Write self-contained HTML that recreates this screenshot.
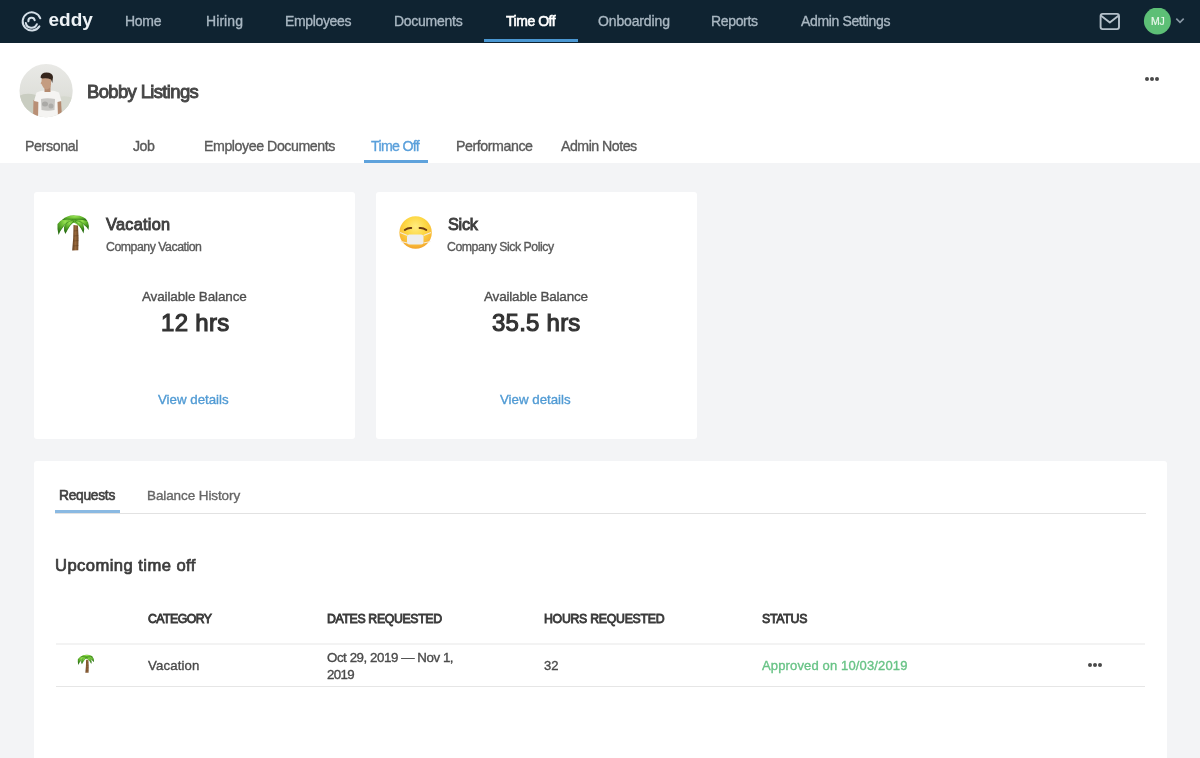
<!DOCTYPE html>
<html><head><meta charset="utf-8">
<style>
html,body{margin:0;padding:0;}
body{width:1200px;height:758px;overflow:hidden;position:relative;background:#f3f4f6;font-family:"Liberation Sans",sans-serif;}
.abs{position:absolute;}
.t{position:absolute;white-space:nowrap;will-change:transform;}
#nav{left:0;top:0;width:1200px;height:42.5px;background:#0f2331;}
#navul{left:483.5px;top:39px;width:94px;height:3px;background:#4a97d2;}
#hdr{left:0;top:42.5px;width:1200px;height:120.3px;background:#ffffff;}
#subul{left:364px;top:160px;width:63.5px;height:3px;background:#5ea2dc;}
.card{background:#fff;border-radius:3px;}
#card1{left:34px;top:192px;width:320.5px;height:246.5px;}
#card2{left:376px;top:192px;width:320.5px;height:246.5px;}
#panel{left:34px;top:461px;width:1132.5px;height:320px;background:#fff;border-radius:3px;}
#tabline{left:55px;top:512.5px;width:1091px;height:1px;background:#e2e2e2;}
#tabul{left:55px;top:510px;width:65px;height:3px;background:#8ab9e2;}
#hline{left:56px;top:642.5px;width:1088.5px;height:2px;background:#f3f3f3;}
#rline{left:56px;top:686px;width:1088.5px;height:1.3px;background:#e6e6e6;}
.dots{position:absolute;height:4px;}
.dots i{position:absolute;top:0;width:4px;height:4px;border-radius:50%;background:#4a4a4a;}
</style></head>
<body>
<div id="nav" class="abs"></div>
<div id="navul" class="abs"></div>
<svg class="abs" style="left:0;top:0;will-change:transform" width="110" height="42" viewBox="0 0 110 42">
 <g fill="none" stroke="#d3dee7" stroke-width="2" stroke-linecap="round">
  <path d="M40.3 18.3 A9.1 9.1 0 1 0 39.4 26.4"/>
  <path d="M25.8 23.0 A5.8 5.8 0 0 0 36.9 24.2"/>
  <path d="M28.4 21.3 A3.2 3.2 0 0 1 34.7 20.2"/>
 </g>
 <text x="48.5" y="25.8" font-family="Liberation Sans" font-weight="700" font-size="19" fill="#edf2f6">eddy</text>
</svg>
<svg class="abs" style="left:1095px;top:8px" width="95" height="30" viewBox="1095 8 95 30">
 <rect x="1100.6" y="13.9" width="18.4" height="15.2" rx="2" fill="none" stroke="#b5c1cb" stroke-width="1.9"/>
 <path d="M1100.8 15.5 L1109.8 22.4 L1118.8 15.5" fill="none" stroke="#b5c1cb" stroke-width="1.9" stroke-linejoin="round"/>
 <circle cx="1157.4" cy="21" r="13.5" fill="#5dbf76"/>
 <path d="M1176.3 18.6 L1180 22.3 L1183.7 18.6" fill="none" stroke="#8a99a6" stroke-width="1.6"/>
</svg>
<div id="hdr" class="abs"></div>
<svg class="abs" style="left:19px;top:64px" width="54" height="54" viewBox="19 64 54 54">
 <defs>
  <clipPath id="avc"><circle cx="46.1" cy="90.7" r="26.6"/></clipPath>
  <linearGradient id="avbg" x1="0" y1="0" x2="0" y2="1">
   <stop offset="0" stop-color="#e9e9e6"/><stop offset="0.5" stop-color="#e0e1dc"/><stop offset="1" stop-color="#d3d6cc"/>
  </linearGradient>
  <filter id="avb" x="-10%" y="-10%" width="120%" height="120%"><feGaussianBlur stdDeviation="0.6"/></filter>
 </defs>
 <g clip-path="url(#avc)">
  <rect x="19" y="64" width="54" height="54" fill="url(#avbg)"/>
  <g filter="url(#avb)">
  <path d="M19 96 Q26 92 36 95 L36 118 L19 118 Z" fill="#c9cdc1"/>
  <path d="M58 97 Q66 95 73 98 L73 118 L58 118 Z" fill="#d5d8ce"/>
  <path d="M33.5 100 L38.5 99 L39 118 L33 118 Z" fill="#b98f74"/>
  <path d="M56.5 99 L61 100 L62 118 L57 118 Z" fill="#b48a70"/>
  <path d="M36.5 92.5 Q41 90.5 44.5 90.5 L50 90.5 Q55 90.5 59 92.5 L61.5 101 L57.5 102 L58 118 L38 118 L38.5 102 L34 101 Z" fill="#f5f4f2"/>
  <path d="M41 99 Q47 97.5 55 99 L54.5 110 Q48 111.5 41.5 110 Z" fill="#a9a7a4" opacity="0.6"/>
  <ellipse cx="45" cy="104" rx="3" ry="2.5" fill="#8e8c89" opacity="0.5"/>
  <ellipse cx="51" cy="106" rx="2.5" ry="2.5" fill="#8e8c89" opacity="0.45"/>
  <path d="M44.5 86 L50.5 86 L50.5 92 L44.5 92 Z" fill="#b48a70"/>
  <path d="M41.8 77 Q42 75 46 75 Q51 75 51.2 79 L51 85 Q50 89 46.5 89.5 Q43.5 89 42.5 86 L41.5 84 L40.6 83.5 L41.5 81.5 Z" fill="#c49c80"/>
  <path d="M40.5 77.5 Q41 72.5 46.5 72.5 Q52.5 72.5 53 77 L52.3 83 L51 79.5 Q47 77.5 42 78.5 Z" fill="#35271f"/>
  </g>
 </g>
</svg>
<div class="dots" style="left:1144.8px;top:76.9px;width:14px"><i style="left:0"></i><i style="left:5px"></i><i style="left:10px"></i></div>
<div id="subul" class="abs"></div>
<div id="card1" class="abs card"></div>
<div id="card2" class="abs card"></div>
<svg width="0" height="0" style="position:absolute"><defs><symbol id="palm" viewBox="52 210 44 44">
 <defs>
  <linearGradient id="trunk" x1="0" y1="0" x2="1" y2="0"><stop offset="0" stop-color="#5e3b1e"/><stop offset="0.5" stop-color="#9a6a3c"/><stop offset="1" stop-color="#6a4524"/></linearGradient>
  <radialGradient id="leaf" cx="0.5" cy="0.25" r="0.7"><stop offset="0" stop-color="#98e452"/><stop offset="0.5" stop-color="#5fb02c"/><stop offset="1" stop-color="#2b7114"/></radialGradient>
 </defs>
 <path d="M73.5 225 L78 225.5 Q79 238 78.3 250.3 L72.2 250.5 Q73.5 238 73.5 225 Z" fill="url(#trunk)"/>
 <path d="M74 231 L78 230.5 M73.8 236 L78.3 235.5 M73.5 241 L78.4 240.5 M73 246 L78.4 245.5" stroke="#5a3a1c" stroke-width="0.7" opacity="0.6"/>
 <g fill="url(#leaf)">
  <path d="M73 217.5 Q62 217 57.5 224 Q57 229 58.5 235 Q61 229 64 226 Q66 222 73 221 Z"/>
  <path d="M73 218 Q66 221 64 227 Q63.5 231 65.5 234 Q67.5 229 70 226 Q72 223 75 222 Z"/>
  <path d="M75 218 Q84 217 88 222 Q89.5 226 88.5 230 Q86 226 83 224 Q79 222 75 222 Z"/>
  <path d="M74 218.5 Q81 220 83.5 225 Q85 229 83.5 233.5 Q81.5 228.5 79 226 Q76 223.5 73 222 Z"/>
  <path d="M62 220 Q68 214.5 76 215.5 Q84 215.5 87.5 221 Q80 219 74 220 Q67 219 62 220 Z"/>
 </g>
 <path d="M73 220 Q65 222 60 231 M74 221 Q69 225 66 232 M75 220 Q82 221 87 227 M75 221 Q80 224 83 231" stroke="#2f7a18" stroke-width="0.8" fill="none" opacity="0.7"/>
</symbol></defs></svg>
<svg class="abs" style="left:52px;top:210px" width="44" height="44"><use href="#palm" width="44" height="44"/></svg>
<svg class="abs" style="left:394px;top:210px" width="44" height="44" viewBox="394 210 44 44">
 <defs>
  <radialGradient id="face" cx="0.5" cy="0.32" r="0.72"><stop offset="0" stop-color="#ffec80"/><stop offset="0.45" stop-color="#fdd743"/><stop offset="0.8" stop-color="#f8b735"/><stop offset="1" stop-color="#ef9c2a"/></radialGradient>
 </defs>
 <circle cx="415.6" cy="232.5" r="16.2" fill="url(#face)"/>
 <path d="M404.8 230 Q408 227.6 411.2 228" fill="none" stroke="#6b3a12" stroke-width="2" stroke-linecap="round"/>
 <path d="M419.6 228 Q423 227.6 426.3 230" fill="none" stroke="#6b3a12" stroke-width="2" stroke-linecap="round"/>
 <path d="M400 232.5 L407.5 235.5 M400.8 241.5 L407.5 243 M431 232.5 L423.5 235.5 M430.4 241.5 L423.5 243" stroke="#f4ead8" stroke-width="1.2"/>
 <rect x="407" y="234.6" width="16.5" height="9.8" rx="2.5" fill="#eeeeee"/>
</svg>
<div id="panel" class="abs"></div>
<div id="tabline" class="abs"></div>
<div id="tabul" class="abs"></div>
<div id="hline" class="abs"></div>
<div id="rline" class="abs"></div>
<svg class="abs" style="left:74.73px;top:652.45px" width="22.66" height="22.66"><use href="#palm" width="22.66" height="22.66"/></svg>
<div class="dots" style="left:1087.6px;top:663.3px;width:14px"><i style="left:0"></i><i style="left:5.3px"></i><i style="left:10.6px"></i></div>
<div class="t" id="nhome" style="left:125.25px;top:14.31px;font-size:14px;line-height:14px;font-weight:400;color:#a9b7c2;letter-spacing:-0.267px;-webkit-text-stroke:0.35px #a9b7c2">Home</div>
<div class="t" id="nhir" style="left:205.55px;top:14.31px;font-size:14px;line-height:14px;font-weight:400;color:#a9b7c2;letter-spacing:0.080px;-webkit-text-stroke:0.35px #a9b7c2">Hiring</div>
<div class="t" id="nemp" style="left:285.38px;top:14.31px;font-size:14px;line-height:14px;font-weight:400;color:#a9b7c2;letter-spacing:-0.359px;-webkit-text-stroke:0.35px #a9b7c2">Employees</div>
<div class="t" id="ndoc" style="left:393.60px;top:14.31px;font-size:14px;line-height:14px;font-weight:400;color:#a9b7c2;letter-spacing:-0.269px;-webkit-text-stroke:0.35px #a9b7c2">Documents</div>
<div class="t" id="ntime" style="left:505.60px;top:14.31px;font-size:14px;line-height:14px;font-weight:400;color:#ffffff;letter-spacing:-0.471px;-webkit-text-stroke:0.6px #ffffff">Time Off</div>
<div class="t" id="nonb" style="left:598.25px;top:14.31px;font-size:14px;line-height:14px;font-weight:400;color:#a9b7c2;letter-spacing:-0.139px;-webkit-text-stroke:0.35px #a9b7c2">Onboarding</div>
<div class="t" id="nrep" style="left:711.00px;top:14.31px;font-size:14px;line-height:14px;font-weight:400;color:#a9b7c2;letter-spacing:-0.342px;-webkit-text-stroke:0.35px #a9b7c2">Reports</div>
<div class="t" id="nadm" style="left:801.00px;top:14.31px;font-size:14px;line-height:14px;font-weight:400;color:#a9b7c2;letter-spacing:-0.362px;-webkit-text-stroke:0.35px #a9b7c2">Admin Settings</div>
<div class="t" id="mj" style="left:1150.55px;top:16.00px;font-size:10.5px;line-height:10.5px;font-weight:400;color:#e9f7ec;letter-spacing:-0.350px;-webkit-text-stroke:0.2px #e9f7ec">MJ</div>
<div class="t" id="name" style="left:87.45px;top:82.70px;font-size:18.5px;line-height:18.5px;font-weight:400;color:#464646;letter-spacing:-0.658px;-webkit-text-stroke:0.9px #464646">Bobby Listings</div>
<div class="t" id="tpers" style="left:25.00px;top:138.82px;font-size:14.2px;line-height:14.2px;font-weight:400;color:#5a5a5a;letter-spacing:-0.379px;-webkit-text-stroke:0.35px #5a5a5a">Personal</div>
<div class="t" id="tjob" style="left:133.45px;top:138.82px;font-size:14.2px;line-height:14.2px;font-weight:400;color:#5a5a5a;letter-spacing:-0.500px;-webkit-text-stroke:0.35px #5a5a5a">Job</div>
<div class="t" id="tedoc" style="left:204.45px;top:138.82px;font-size:14.2px;line-height:14.2px;font-weight:400;color:#5a5a5a;letter-spacing:-0.438px;-webkit-text-stroke:0.35px #5a5a5a">Employee Documents</div>
<div class="t" id="ttime" style="left:371.38px;top:138.82px;font-size:14.2px;line-height:14.2px;font-weight:400;color:#5ba0db;letter-spacing:-0.696px;-webkit-text-stroke:0.35px #5ba0db">Time Off</div>
<div class="t" id="tperf" style="left:456.00px;top:138.82px;font-size:14.2px;line-height:14.2px;font-weight:400;color:#5a5a5a;letter-spacing:-0.425px;-webkit-text-stroke:0.35px #5a5a5a">Performance</div>
<div class="t" id="tadm" style="left:561.38px;top:138.82px;font-size:14.2px;line-height:14.2px;font-weight:400;color:#5a5a5a;letter-spacing:-0.512px;-webkit-text-stroke:0.35px #5a5a5a">Admin Notes</div>
<div class="t" id="c1t" style="left:106.45px;top:215.81px;font-size:16.3px;line-height:16.3px;font-weight:400;color:#3f3f3f;letter-spacing:0.286px;-webkit-text-stroke:0.9px #3f3f3f">Vacation</div>
<div class="t" id="c1s" style="left:105.70px;top:241.31px;font-size:12.3px;line-height:12.3px;font-weight:400;color:#5a5a5a;letter-spacing:-0.470px;-webkit-text-stroke:0.35px #5a5a5a">Company Vacation</div>
<div class="t" id="c1a" style="left:142.15px;top:290.11px;font-size:13.5px;line-height:13.5px;font-weight:400;color:#4f4f4f;letter-spacing:-0.144px;-webkit-text-stroke:0.35px #4f4f4f">Available Balance</div>
<div class="t" id="c1h" style="left:160.60px;top:311.11px;font-size:24px;line-height:24px;font-weight:400;color:#333333;letter-spacing:0.320px;-webkit-text-stroke:1.1px #333333">12 hrs</div>
<div class="t" id="c1v" style="left:158.40px;top:392.81px;font-size:13.3px;line-height:13.3px;font-weight:400;color:#519bd4;letter-spacing:-0.005px;-webkit-text-stroke:0.35px #519bd4">View details</div>
<div class="t" id="c2t" style="left:448.00px;top:215.81px;font-size:16.3px;line-height:16.3px;font-weight:400;color:#3f3f3f;letter-spacing:-0.283px;-webkit-text-stroke:0.9px #3f3f3f">Sick</div>
<div class="t" id="c2s" style="left:447.25px;top:241.31px;font-size:12.3px;line-height:12.3px;font-weight:400;color:#5a5a5a;letter-spacing:-0.467px;-webkit-text-stroke:0.35px #5a5a5a">Company Sick Policy</div>
<div class="t" id="c2a" style="left:484.00px;top:290.11px;font-size:13.5px;line-height:13.5px;font-weight:400;color:#4f4f4f;letter-spacing:-0.188px;-webkit-text-stroke:0.35px #4f4f4f">Available Balance</div>
<div class="t" id="c2h" style="left:492.30px;top:311.11px;font-size:24px;line-height:24px;font-weight:400;color:#333333;letter-spacing:0.236px;-webkit-text-stroke:1.1px #333333">35.5 hrs</div>
<div class="t" id="c2v" style="left:500.40px;top:392.81px;font-size:13.3px;line-height:13.3px;font-weight:400;color:#519bd4;letter-spacing:-0.005px;-webkit-text-stroke:0.35px #519bd4">View details</div>
<div class="t" id="req" style="left:59.00px;top:488.81px;font-size:13.8px;line-height:13.8px;font-weight:400;color:#404040;letter-spacing:-0.286px;-webkit-text-stroke:0.6px #404040">Requests</div>
<div class="t" id="bal" style="left:147.40px;top:488.81px;font-size:13.5px;line-height:13.5px;font-weight:400;color:#666666;letter-spacing:-0.100px;-webkit-text-stroke:0.35px #666666">Balance History</div>
<div class="t" id="up" style="left:55.45px;top:557.51px;font-size:16.6px;line-height:16.6px;font-weight:400;color:#3c3c3c;letter-spacing:0.438px;-webkit-text-stroke:0.7px #3c3c3c">Upcoming time off</div>
<div class="t" id="hcat" style="left:148.45px;top:612.91px;font-size:12.3px;line-height:12.3px;font-weight:400;color:#3a3a3a;letter-spacing:-0.557px;-webkit-text-stroke:0.85px #3a3a3a">CATEGORY</div>
<div class="t" id="hdat" style="left:326.55px;top:612.91px;font-size:12.3px;line-height:12.3px;font-weight:400;color:#3a3a3a;letter-spacing:-0.357px;-webkit-text-stroke:0.85px #3a3a3a">DATES REQUESTED</div>
<div class="t" id="hhrs" style="left:544.40px;top:612.91px;font-size:12.3px;line-height:12.3px;font-weight:400;color:#3a3a3a;letter-spacing:-0.271px;-webkit-text-stroke:0.85px #3a3a3a">HOURS REQUESTED</div>
<div class="t" id="hsta" style="left:762.45px;top:612.91px;font-size:12.3px;line-height:12.3px;font-weight:400;color:#3a3a3a;letter-spacing:-0.260px;-webkit-text-stroke:0.85px #3a3a3a">STATUS</div>
<div class="t" id="rvac" style="left:148.00px;top:659.20px;font-size:13.2px;line-height:13.2px;font-weight:400;color:#4a4a4a;letter-spacing:0.143px;-webkit-text-stroke:0.35px #4a4a4a">Vacation</div>
<div class="t" id="rd1" style="left:326.55px;top:650.61px;font-size:13.3px;line-height:13.3px;font-weight:400;color:#4a4a4a;letter-spacing:-0.435px;-webkit-text-stroke:0.35px #4a4a4a">Oct 29, 2019 — Nov 1,</div>
<div class="t" id="rd2" style="left:326.55px;top:668.31px;font-size:13.3px;line-height:13.3px;font-weight:400;color:#4a4a4a;letter-spacing:-0.617px;-webkit-text-stroke:0.35px #4a4a4a">2019</div>
<div class="t" id="r32" style="left:544.20px;top:659.41px;font-size:13px;line-height:13px;font-weight:400;color:#4a4a4a;letter-spacing:0.100px;-webkit-text-stroke:0.35px #4a4a4a">32</div>
<div class="t" id="rapp" style="left:761.55px;top:659.20px;font-size:13px;line-height:13px;font-weight:400;color:#68c386;letter-spacing:0.143px;-webkit-text-stroke:0.35px #68c386">Approved on 10/03/2019</div>
</body></html>
